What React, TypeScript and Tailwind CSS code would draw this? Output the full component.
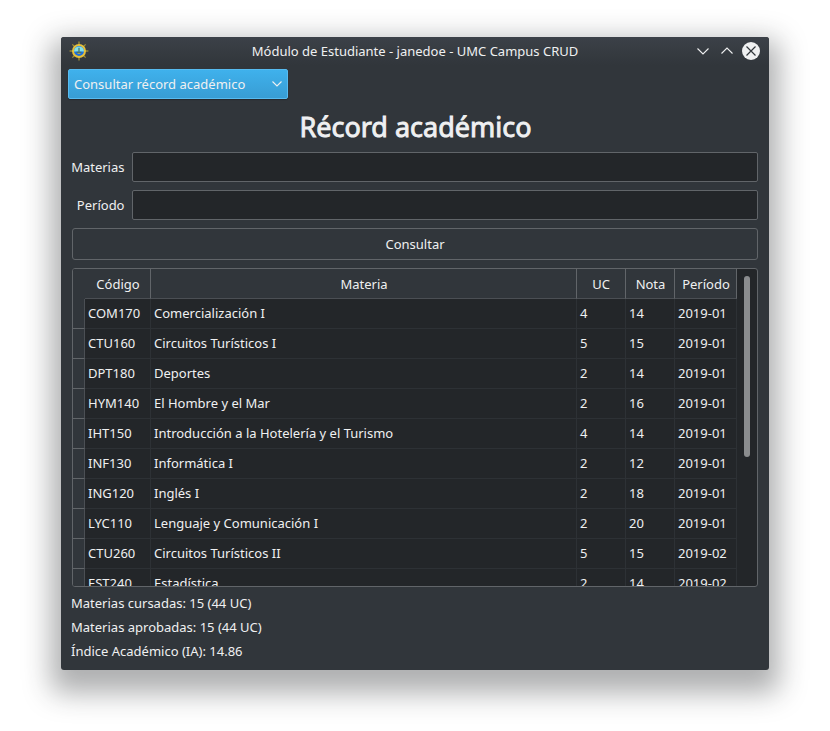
const rows: [string, string, number, number, string][] = [
  ["COM170", "Comercialización I", 4, 14, "2019-01"],
  ["CTU160", "Circuitos Turísticos I", 5, 15, "2019-01"],
  ["DPT180", "Deportes", 2, 14, "2019-01"],
  ["HYM140", "El Hombre y el Mar", 2, 16, "2019-01"],
  ["IHT150", "Introducción a la Hotelería y el Turismo", 4, 14, "2019-01"],
  ["INF130", "Informática I", 2, 12, "2019-01"],
  ["ING120", "Inglés I", 2, 18, "2019-01"],
  ["LYC110", "Lenguaje y Comunicación I", 2, 20, "2019-01"],
  ["CTU260", "Circuitos Turísticos II", 5, 15, "2019-02"],
  ["EST240", "Estadística", 2, 14, "2019-02"],
];

const columns = "grid grid-cols-[12px_66px_426px_49px_49px_62px]";

function Helm() {
  return (
    <svg width="20" height="20" viewBox="0 0 20 20">
      {[0, 45, 90, 135, 180, 225, 270, 315].map((angle) => (
        <path
          key={angle}
          d="M10 4V0.6"
          transform={`rotate(${angle} 10 10)`}
          stroke={angle % 90 === 0 ? "#b09c38" : "#a08f34"}
          strokeWidth="1.2"
        />
      ))}
      <circle cx="10" cy="10" r="6" fill="#1c6fe0" stroke="#e6c03a" strokeWidth="2" />
      <path d="M5 10.4a5 5 0 0 1 10 0z" fill="#84e0e6" />
      <path d="M10 6.8v5.6M7.8 10.8c.6 1.8 3.8 1.8 4.4 0" fill="none" stroke="#4d7458" strokeWidth="1.2" />
      <path d="M8.6 12.400h2.800" stroke="#c9b552" strokeWidth="0.8" />
    </svg>
  );
}

function Field({ label }: { label: string }) {
  return (
    <div className="flex h-[30px] items-center">
      <label className="w-[53.5px] shrink-0 pt-px text-right">{label}</label>
      <input className="ml-[7.5px] h-[30px] min-w-0 flex-1 rounded-[2px] border border-[#616569] bg-[#232629] outline-none" />
    </div>
  );
}

function RecordTable() {
  return (
    <div className="mx-px mt-2 flex h-[319px] overflow-hidden rounded-[3px] border border-[#616569] bg-[#232629]">
      <div className="w-[664px] shrink-0">
        <div className={`${columns} h-[30px] grid-rows-[30px] bg-[#31363b] text-center leading-[30px]`}>
          <div />
          <div className="border-r border-b border-r-[#616569] border-b-[#4b4f54] pl-px">Código</div>
          <div className="border-r border-b border-r-[#616569] border-b-[#4b4f54] pl-px">Materia</div>
          <div className="border-r border-b border-r-[#616569] border-b-[#4b4f54]">UC</div>
          <div className="border-r border-b border-r-[#616569] border-b-[#4b4f54] pl-px">Nota</div>
          <div className="border-r border-b border-r-[#616569] border-b-[#4b4f54] pl-px">Período</div>
        </div>
        {rows.map(([code, name, credits, grade, period]) => (
          <div key={code} className={`${columns} h-[30px] leading-[29px]`}>
            <div className="border-r border-b border-r-[#4b4f54] border-b-[#616569] bg-[#31363b]" />
            <div className="border-r border-b border-[#2d3135] pl-[3px]">{code}</div>
            <div className="border-r border-b border-[#2d3135] pl-[3px]">{name}</div>
            <div className="border-r border-b border-[#2d3135] pl-[3px]">{credits}</div>
            <div className="border-r border-b border-[#2d3135] pl-[3px]">{grade}</div>
            <div className="border-r border-b border-[#2d3135] pl-[3px]">{period}</div>
          </div>
        ))}
      </div>
      <div className="flex-1 pt-[7px] pl-[7px]">
        <div className="h-[181px] w-[6px] rounded-full bg-[#8a8c8e]" />
      </div>
    </div>
  );
}

export default function App() {
  return (
    <div className="h-[731px] w-[830px] overflow-hidden bg-white pt-[37px] pl-[61px] font-['Noto_Sans',sans-serif] text-[13px] whitespace-nowrap text-[#eff0f1]">
      <div className="h-[633px] w-[708px] rounded-[3px] bg-[#31363b] shadow-[0_13px_28px_10px_rgba(35,38,41,0.37)]">
        <header className="flex h-[28px] items-center rounded-t-[3px] bg-linear-to-b from-[#3c4148] to-[#31363b] pl-2">
          <Helm />
          <h1 className="ml-[28px] w-[596px] pt-px text-center">Módulo de Estudiante - janedoe - UMC Campus CRUD</h1>
        </header>
        <div className="-mt-[28px] flex h-[28px] justify-end gap-[6px] pt-[5px] pr-[9px]">
          <svg width="18" height="18" viewBox="0 0 18 18" fill="none" stroke="#eff0f1" strokeWidth="1.1">
            <path d="M3.5 6.5 9 12l5.5-5.5" />
          </svg>
          <svg width="18" height="18" viewBox="0 0 18 18" fill="none" stroke="#eff0f1" strokeWidth="1.1">
            <path d="M3.5 11.5 9 6l5.5 5.5" />
          </svg>
          <svg width="18" height="18" viewBox="0 0 18 18">
            <circle cx="9" cy="9" r="9" fill="#eff0f1" />
            <path d="m4.5 4.5 9 9m0-9-9 9" stroke="#31363b" strokeWidth="1.2" />
          </svg>
        </div>
        <main className="px-[10px] pt-1">
          <button className="-ml-[3px] flex h-[30px] w-[220px] items-center justify-between rounded-[2px] border border-[#57bbf0] bg-linear-to-b from-[#3fb1ec] to-[#389dd4] px-[5px] shadow-[0_1px_1px_rgba(0,0,0,0.25)]">
            <span className="pt-px">Consultar récord académico</span>
            <svg width="10" height="10" viewBox="0 0 10 10" fill="none" stroke="#eff0f1" strokeWidth="1.1">
              <path d="M0.5 2.5 5 7l4.5-4.5" />
            </svg>
          </button>
          <h2 className="mt-2 h-[38px] pl-px text-center text-[27px] leading-[39px] [-webkit-text-stroke:0.9px_#eff0f1]">Récord académico</h2>
          <div className="mt-[7px] pr-[1px]">
            <Field label="Materias" />
            <div className="h-2" />
            <Field label="Período" />
          </div>
          <button className="mt-2 ml-px block h-[32px] w-[686px] rounded-[3px] border border-[#616569] pt-px">Consultar</button>
          <RecordTable />
          <div className="mt-1 leading-[24px]">
            <p>Materias cursadas: 15 (44 UC)</p>
            <p>Materias aprobadas: 15 (44 UC)</p>
            <p>Índice Académico (IA): 14.86</p>
          </div>
        </main>
      </div>
    </div>
  );
}
